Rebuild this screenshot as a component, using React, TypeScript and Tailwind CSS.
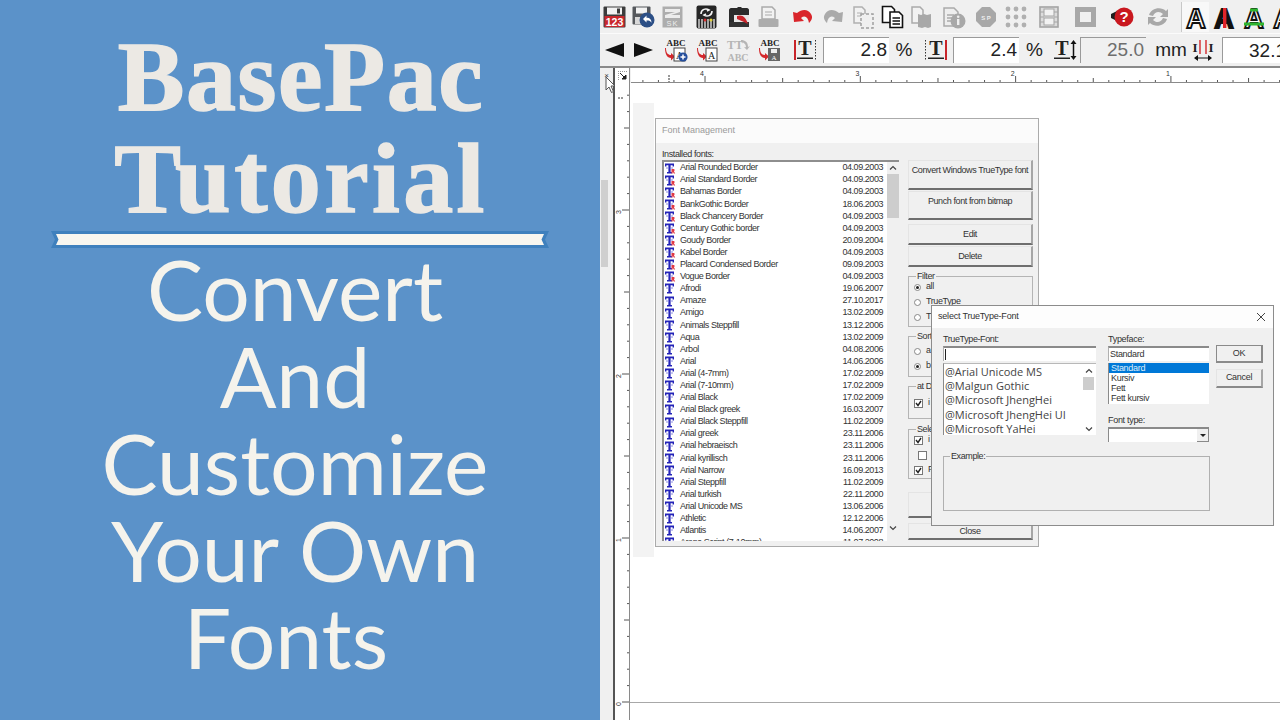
import type { ReactNode } from "react";

const fonts: [string, string, boolean][] = [
  ["Arial Rounded Border", "04.09.2003", true],
  ["Arial Standard Border", "04.09.2003", true],
  ["Bahamas Border", "04.09.2003", true],
  ["BankGothic Border", "18.06.2003", true],
  ["Black Chancery Border", "04.09.2003", true],
  ["Century Gothic border", "04.09.2003", true],
  ["Goudy Border", "20.09.2004", true],
  ["Kabel Border", "04.09.2003", true],
  ["Placard Condensed Border", "09.09.2003", true],
  ["Vogue Border", "04.09.2003", true],
  ["Afrodi", "19.06.2007", false],
  ["Amaze", "27.10.2017", false],
  ["Amigo", "13.02.2009", false],
  ["Animals Steppfill", "13.12.2006", false],
  ["Aqua", "13.02.2009", false],
  ["Arbol", "04.08.2006", false],
  ["Arial", "14.06.2006", false],
  ["Arial (4-7mm)", "17.02.2009", false],
  ["Arial (7-10mm)", "17.02.2009", false],
  ["Arial Black", "17.02.2009", false],
  ["Arial Black greek", "16.03.2007", false],
  ["Arial Black Steppfill", "11.02.2009", false],
  ["Arial greek", "23.11.2006", false],
  ["Arial hebraeisch", "23.11.2006", false],
  ["Arial kyrillisch", "23.11.2006", false],
  ["Arial Narrow", "16.09.2013", false],
  ["Arial Steppfill", "11.02.2009", false],
  ["Arial turkish", "22.11.2000", false],
  ["Arial Unicode MS", "13.06.2006", false],
  ["Athletic", "12.12.2006", false],
  ["Atlantis", "14.06.2007", false],
  ["Arena Script (7-10mm)", "11.07.2008", false],
];

const ttFonts = ["@Arial Unicode MS", "@Malgun Gothic", "@Microsoft JhengHei", "@Microsoft JhengHei UI", "@Microsoft YaHei"];

function Cell({ children, w = "w-[29px]" }: { children: ReactNode; w?: string }) {
  return <div className={`${w} h-full flex items-center justify-center shrink-0`}>{children}</div>;
}

function Svg({ w = 24, h = 24, children }: { w?: number; h?: number; children: ReactNode }) {
  return (
    <svg width={w} height={h} viewBox={`0 0 ${w} ${h}`}>
      {children}
    </svg>
  );
}

const serif = "Liberation Serif, serif";

function Floppy() {
  return (
    <Svg w={23} h={22}>
      <rect x="0.5" y="0.5" width="22" height="21" rx="1" fill="#3c3c3c" />
      <rect x="4" y="1.5" width="15" height="7" fill="#f2f2f2" />
      <rect x="14" y="2.5" width="3" height="5" fill="#3c3c3c" />
      <rect x="1.5" y="10" width="20" height="11" fill="#c9272c" />
      <text x="11.5" y="19.5" textAnchor="middle" fontSize="10.5" fontWeight="700" fill="#fff" fontFamily="Liberation Sans, sans-serif">
        123
      </text>
    </Svg>
  );
}

function FloppyBack() {
  return (
    <Svg w={23} h={22}>
      <rect x="0.5" y="0.5" width="18" height="18" rx="1" fill="#55585c" />
      <rect x="4" y="1.5" width="11" height="6" fill="#f2f2f2" />
      <rect x="3" y="11" width="9" height="7" fill="#d8d8d8" />
      <circle cx="15" cy="14" r="7.5" fill="#2c4f86" />
      <path d="M11 13l3.5-3.5v2.2c3.5 0 5 2 5 5-1-1.7-2.5-2.3-5-2.2v2z" fill="#fff" />
    </Svg>
  );
}

function GreyZ() {
  return (
    <Svg w={21} h={22}>
      <rect x="0.5" y="0.5" width="20" height="21" fill="#adadad" />
      <path d="M3 3h15v3L9 9h9v3H3V9l10-3H3z" fill="#ececec" />
      <text x="10.5" y="20" textAnchor="middle" fontSize="7.5" letterSpacing="1" fill="#ececec" fontFamily="Liberation Sans, sans-serif">
        SK
      </text>
    </Svg>
  );
}

function Stitches() {
  return (
    <Svg w={21} h={24}>
      <rect x="0.5" y="0.5" width="20" height="23" rx="2" fill="#262626" />
      <path d="M5 9c0-5 5-6 8-4l-2 1M16 6c0 5-5 6-8 4l2-1" stroke="#f4f4f4" strokeWidth="1.6" fill="none" />
      <path d="M3 14v9M6 14v9M9 14v9M12 14v9M15 14v9M18 14v9" stroke="#e8e8e8" strokeWidth="1.3" />
      <circle cx="9" cy="15" r="1.5" fill="#d23030" />
      <circle cx="15" cy="15" r="1.6" fill="#e0d040" />
    </Svg>
  );
}

function Machine() {
  return (
    <Svg w={22} h={22}>
      <path d="M1 4c0-1 1-2 2-2h6l1-1h3l1 1h5c1 0 2 1 2 2v6H1z" fill="#2b2b2b" />
      <rect x="1" y="10" width="5" height="7" fill="#2b2b2b" />
      <rect x="6" y="9" width="15" height="8" fill="#e6e6e6" />
      <rect x="1" y="16" width="20" height="5" fill="#333" />
      <path d="M9 10c5-2 9 1 11 8l-4-2-7-3z" fill="#c8242a" />
    </Svg>
  );
}

function Printer() {
  return (
    <Svg w={21} h={22}>
      <path d="M4 1h10l3 3v9H4z" fill="#f2f2f2" stroke="#aaa" strokeWidth="1.5" />
      <path d="M7 6h7M7 9h7" stroke="#aaa" strokeWidth="1.2" />
      <rect x="0.5" y="13" width="20" height="8" rx="1" fill="#acacac" />
    </Svg>
  );
}

function Turn({ color, flip }: { color: string; flip?: boolean }) {
  return (
    <Svg w={21} h={15}>
      <g transform={flip ? "translate(21 0) scale(-1 1)" : undefined}>
        <path d="M1 3l1 10 10-1-3-3c4-3 7-1 8 5 3-3 4-6 2-9-3-5-9-5-14-1z" fill={color} />
      </g>
    </Svg>
  );
}

function CopyDashed() {
  return (
    <Svg w={22} h={24}>
      <path d="M2 2h8l3 3v13H2z" fill="#f2f2f2" stroke="#b0b0b0" strokeWidth="1.5" />
      <path d="M5 8h5M5 11h5" stroke="#b0b0b0" />
      <rect x="9" y="9" width="12" height="14" fill="#f0f0f0" stroke="#a0a0a0" strokeWidth="1.5" strokeDasharray="3 2" />
    </Svg>
  );
}

function CopyBlack() {
  return (
    <Svg w={23} h={24}>
      <path d="M1.5 1.5h9l3 3v13h-12z" fill="#fff" stroke="#111" strokeWidth="1.6" />
      <path d="M9 7h9l3.5 3.5v12H9z" fill="#fff" stroke="#111" strokeWidth="1.6" />
      <path d="M11.5 13h7.5M11.5 16h7.5M11.5 19h7.5" stroke="#111" strokeWidth="1.4" />
    </Svg>
  );
}

function PasteGrey() {
  return (
    <Svg w={23} h={24}>
      <path d="M2 2h8l3 3v13H2z" fill="#f2f2f2" stroke="#aaa" strokeWidth="1.5" />
      <path d="M8 9l3 1 3-1 3 1 4-1v13l-3 1-3-1-3 1-4-1z" fill="#a8a8a8" />
    </Svg>
  );
}

function DocInfo() {
  return (
    <Svg w={24} h={24}>
      <path d="M2 3h10l4 4v14H2z" fill="#eee" stroke="#aaa" strokeWidth="1.5" />
      <path d="M5 10h7M5 13h5M5 16h5" stroke="#aaa" strokeWidth="1.3" />
      <circle cx="16" cy="16" r="7.5" fill="#a8a8a8" />
      <rect x="15" y="14" width="2.4" height="6" fill="#eee" />
      <circle cx="16.2" cy="11.8" r="1.3" fill="#eee" />
    </Svg>
  );
}

function HexStop() {
  return (
    <Svg w={22} h={24}>
      <path d="M7 2h8l6 6v8l-6 6H7l-6-6V8z" fill="#a8a8a8" />
      <text x="11" y="14.5" textAnchor="middle" fontSize="6" fill="#eee" fontWeight="700" fontFamily="Liberation Sans, sans-serif">
        S P
      </text>
    </Svg>
  );
}

function Dots() {
  const pts = [3, 11, 19];
  return (
    <Svg w={22} h={22}>
      {pts.map((y) => pts.map((x) => <circle key={`${x}-${y}`} cx={x} cy={y} r="2.4" fill="#b0b0b0" />))}
    </Svg>
  );
}

function Film() {
  return (
    <Svg w={20} h={22}>
      <rect x="1" y="1" width="18" height="20" fill="#dcdcdc" stroke="#a4a4a4" strokeWidth="1.6" />
      <rect x="5" y="3" width="10" height="7" fill="#f2f2f2" stroke="#a4a4a4" />
      <rect x="5" y="12" width="10" height="7" fill="#f2f2f2" stroke="#a4a4a4" />
      <path d="M1 6h4M1 11h4M1 16h4M15 6h4M15 11h4M15 16h4" stroke="#a4a4a4" />
    </Svg>
  );
}

function Help() {
  return (
    <Svg w={24} h={24}>
      <path d="M1 9l6-3v10l-6-3z" fill="#1e1e1e" />
      <circle cx="14" cy="12" r="9.5" fill="#c9181f" />
      <text x="14" y="17" textAnchor="middle" fontSize="15" fontWeight="700" fill="#fff" fontFamily="Liberation Sans, sans-serif">
        ?
      </text>
    </Svg>
  );
}

function Refresh() {
  return (
    <Svg w={24} h={24}>
      <path d="M3 10C5 3 15 1 20 6l2-2v8h-8l3-3c-3-3-8-3-10 2z" fill="#a8a8a8" />
      <path d="M21 14c-2 7-12 9-17 4l-2 2v-8h8l-3 3c3 3 8 3 10-2z" fill="#a8a8a8" />
    </Svg>
  );
}

function BigA({ fill, stroke, bar }: { fill: string; stroke: string; bar?: "red" | "green" }) {
  return (
    <Svg w={26} h={28}>
      <text x="13" y="25" textAnchor="middle" fontSize="27" fontWeight="700" fill={fill} stroke={stroke} strokeWidth="1.8" fontFamily="Liberation Sans, sans-serif">
        A
      </text>
      {bar === "red" && <rect x="12" y="5" width="3.4" height="20" fill="#e0242a" />}
      {bar === "green" && <path d="M3 21h20M9 7h8" stroke="#2fb52f" strokeWidth="3" />}
    </Svg>
  );
}

function AbcIcon({ mini, grey }: { mini: "add" | "a" | "save"; grey?: boolean }) {
  return (
    <Svg w={24} h={24}>
      <text x="12" y="8" textAnchor="middle" fontSize="9" fontWeight="700" fill={grey ? "#aaa" : "#222"} fontFamily={serif}>
        ABC
      </text>
      <path d="M2 10c0 5 2 7 5 7v-2l4 3.5-4 4V20c-4 0-6-4-6-10z" fill="#d3282c" />
      {mini === "save" ? (
        <>
          <rect x="10" y="10" width="12" height="13" fill="#666" />
          <rect x="13" y="11" width="6" height="4" fill="#eee" />
          <text x="16" y="22" textAnchor="middle" fontSize="7" fill="#fff" fontFamily={serif}>
            A
          </text>
        </>
      ) : (
        <>
          <rect x="10" y="10" width="11" height="13" fill="#fff" stroke="#444" />
          <text x="15.5" y="21" textAnchor="middle" fontSize="10" fill="#222" fontFamily={serif}>
            A
          </text>
        </>
      )}
      {mini === "add" && (
        <>
          <circle cx="19" cy="19" r="4.6" fill="#254f9c" />
          <path d="M16.5 19h5M19 16.5v5" stroke="#fff" strokeWidth="1.5" />
        </>
      )}
    </Svg>
  );
}

function TtAbc() {
  return (
    <Svg w={24} h={24}>
      <text x="1" y="11" fontSize="12" fontWeight="700" fill="#b5b5b5" fontFamily={serif}>
        TT
      </text>
      <path d="M15 2c4 0 7 2 7 7l2-1-3 4-3-3 2 .2c0-3-2-5-5-5z" fill="#b5b5b5" />
      <text x="12" y="23" textAnchor="middle" fontSize="10" fontWeight="700" fill="#b5b5b5" fontFamily={serif}>
        ABC
      </text>
    </Svg>
  );
}

function TScale({ side }: { side: "left" | "right" }) {
  return (
    <Svg w={24} h={22}>
      {side === "left" ? <rect x="1" y="1" width="2" height="20" fill="#c8242a" /> : <path d="M1.5 1v20" stroke="#333" strokeDasharray="1.5 1.5" />}
      <text x="12" y="16" textAnchor="middle" fontSize="20" fontWeight="700" fill="#222" fontFamily={serif}>
        T
      </text>
      <rect x="4" y="18.5" width="16" height="1.5" fill="#222" />
      {side === "left" ? <path d="M22.5 1v20" stroke="#333" strokeDasharray="1.5 1.5" /> : <rect x="21" y="1" width="2" height="20" fill="#c8242a" />}
    </Svg>
  );
}

function THeight() {
  return (
    <Svg w={24} h={22}>
      <text x="9" y="16" textAnchor="middle" fontSize="20" fontWeight="700" fill="#222" fontFamily={serif}>
        T
      </text>
      <rect x="1" y="18.5" width="16" height="1.5" fill="#222" />
      <path d="M20.5 4v14" stroke="#111" strokeWidth="1.5" />
      <path d="M20.5 1l3 4h-6zM20.5 21l3-4h-6z" fill="#111" />
    </Svg>
  );
}

function SpacingIcon() {
  return (
    <Svg w={24} h={24}>
      <path d="M9 2v14M15 2v14" stroke="#d3282c" strokeWidth="1.4" />
      <text x="4" y="14" textAnchor="middle" fontSize="13" fontWeight="700" fill="#222" fontFamily={serif}>
        I
      </text>
      <text x="20" y="14" textAnchor="middle" fontSize="13" fontWeight="700" fill="#222" fontFamily={serif}>
        I
      </text>
      <path d="M7 20h10" stroke="#111" />
      <path d="M3 20l4-3v6zM21 20l-4-3v6z" fill="#111" />
    </Svg>
  );
}

function Field({ value, w, grey }: { value: string; w: string; grey?: boolean }) {
  return (
    <div
      className={`${w} h-[26px] shrink-0 border-l border-t border-l-[#9a9a9a] border-t-[#9a9a9a] flex items-center justify-end pr-[2px] text-[19px] ${
        grey ? "bg-[#f0f0f0] text-[#6e6e6e]" : "bg-white text-[#222]"
      }`}
    >
      {value}
    </div>
  );
}

function Toolbars() {
  return (
    <>
      <div className="h-[34px] flex items-center bg-[#f0f0f0] border-b border-b-[#fbfbfb] overflow-hidden shrink-0">
        <Cell><Floppy /></Cell>
        <Cell><FloppyBack /></Cell>
        <Cell><GreyZ /></Cell>
        <Cell w="w-[38px]"><Stitches /></Cell>
        <Cell w="w-[28px]"><Machine /></Cell>
        <Cell w="w-[30px]"><Printer /></Cell>
        <div className="w-[2px] shrink-0" />
        <Cell w="w-[35px]"><Turn color="#d9252b" /></Cell>
        <Cell w="w-[27px]"><Turn color="#aaaaaa" flip /></Cell>
        <Cell w="w-[31px]"><CopyDashed /></Cell>
        <Cell><CopyBlack /></Cell>
        <Cell><PasteGrey /></Cell>
        <Cell w="w-[35px]"><DocInfo /></Cell>
        <Cell w="w-[30px]"><HexStop /></Cell>
        <Cell w="w-[30px]"><Dots /></Cell>
        <Cell w="w-[36px]"><Film /></Cell>
        <Cell w="w-[37px]"><div className="w-[21px] h-[20px] border-[5px] border-[#a8a8a8] bg-[#f0f0f0]" /></Cell>
        <Cell w="w-[36px]"><Help /></Cell>
        <Cell w="w-[36px]"><Refresh /></Cell>
        <div className="w-px h-[30px] bg-[#c8c8c8] ml-[5px] shrink-0" />
        <div className="w-[27px] h-[30px] bg-[#f8f8f8] flex items-center justify-center shrink-0">
          <BigA fill="#fff" stroke="#111" />
        </div>
        <Cell w="w-[30px]"><BigA fill="#111" stroke="#111" bar="red" /></Cell>
        <Cell w="w-[29px]"><BigA fill="#fff" stroke="#111" bar="green" /></Cell>
        <Cell w="w-[29px]"><BigA fill="#fff" stroke="#111" /></Cell>
      </div>
      <div className="h-[32px] flex items-center bg-[#f0f0f0] overflow-hidden shrink-0">
        <Cell>
          <div className="w-0 h-0 border-y-[7px] border-y-transparent border-r-[19px] border-r-[#111]" />
        </Cell>
        <Cell>
          <div className="w-0 h-0 border-y-[7px] border-y-transparent border-l-[19px] border-l-[#111]" />
        </Cell>
        <Cell w="w-[35px]"><AbcIcon mini="add" /></Cell>
        <Cell w="w-[30px]"><AbcIcon mini="a" /></Cell>
        <Cell w="w-[30px]"><TtAbc /></Cell>
        <Cell w="w-[34px]"><AbcIcon mini="save" /></Cell>
        <Cell w="w-[36px]"><TScale side="left" /></Cell>
        <Field value="2.8" w="w-[66px]" />
        <span className="w-[30px] text-center text-[19px] text-[#222] shrink-0">%</span>
        <Cell w="w-[34px]"><TScale side="right" /></Cell>
        <Field value="2.4" w="w-[66px]" />
        <span className="w-[31px] text-center text-[19px] text-[#222] shrink-0">%</span>
        <Cell w="w-[30px]"><THeight /></Cell>
        <Field value="25.0" w="w-[66px]" grey />
        <span className="w-[42px] pl-[8px] text-center text-[19px] text-[#222] shrink-0">mm</span>
        <Cell w="w-[30px]"><SpacingIcon /></Cell>
        <div className="w-[4px] shrink-0" />
        <div className="w-[60px] h-[26px] shrink-0 bg-white border-l border-t border-l-[#9a9a9a] border-t-[#9a9a9a] pl-[26px] leading-[26px] text-[19px] text-[#222] whitespace-nowrap overflow-hidden">32.1</div>
      </div>
      <div className="h-[2px] bg-[#8a8a8a] shrink-0" />
    </>
  );
}

function HRuler() {
  const ticks = Array.from({ length: 43 }, (_, i) => i);
  return (
    <svg width={649} height={15} viewBox="0 0 649 15" className="block">
      <rect width="649" height="15" fill="#fff" />
      <path d="M0 14.5H649" stroke="#8a8a8a" />
      {ticks.map((i) => {
        const x = 74 - 62.1 + i * 15.53;
        const major = i % 10 === 4;
        const half = i % 10 === 9;
        return <path key={i} d={`M${x} ${major ? 8 : half ? 10 : 12}V14`} stroke="#555" />;
      })}
      <path d="M38 7V14" stroke="#333" strokeDasharray="2 1" />
      {["4", "3", "2", "1"].map((n, i) => (
        <text key={n} x={73 + i * 155.3} y="7.5" fontSize="7" fill="#333" textAnchor="end" fontFamily="Liberation Sans, sans-serif">
          {n}
        </text>
      ))}
    </svg>
  );
}

function VRuler() {
  const ticks = Array.from({ length: 41 }, (_, i) => i);
  return (
    <svg width={15} height={637} viewBox="0 0 15 637" className="block">
      <rect width="15" height="637" fill="#fff" />
      <path d="M14.5 0V637" stroke="#8a8a8a" />
      {ticks.map((i) => {
        const y = 619 - i * 16.4;
        const major = i % 10 === 0;
        const half = i % 10 === 5;
        return <path key={i} d={`M${major ? 7 : half ? 9 : 12} ${y}H14`} stroke="#555" />;
      })}
      <path d="M3 15H8" stroke="#333" strokeDasharray="2 1" />
      {["0", "1", "2", "3"].map((n, i) => (
        <text key={n} x="0" y="0" fontSize="7" fill="#333" textAnchor="middle" transform={`translate(6 ${621 - i * 164}) rotate(-90)`} fontFamily="Liberation Sans, sans-serif">
          {n}
        </text>
      ))}
    </svg>
  );
}

function FontGlyph({ border }: { border: boolean }) {
  return (
    <svg width={12} height={11} viewBox="0 0 12 11" className="shrink-0">
      <path d="M1 .5h9v3H8.6V2.2H6.6V9H8v1.5H3V9h1.4V2.2H2.4v1.3H1z" fill="#2424b8" />
      <path d="M2 5h2.4M6.6 5H9" stroke="#8a8ae0" />
      {border && <path d="M7.5 6h2.2c1.2 0 1.2 2 .2 2.2L11.2 10.5H9.8L8.7 8.4v2.1H7.5z" fill="#e03844" />}
    </svg>
  );
}

function Chevron({ dir }: { dir: "up" | "down" }) {
  return (
    <svg width={8} height={6} viewBox="0 0 8 6">
      <path d={dir === "up" ? "M1 4.5l3-3 3 3" : "M1 1.5l3 3 3-3"} stroke="#444" strokeWidth="1.2" fill="none" />
    </svg>
  );
}

function WinButton({ label, h, top }: { label: string; h: string; top?: boolean }) {
  return (
    <div
      className={`${h} w-full shrink-0 flex justify-center bg-[#f0f0f0] border-t border-l border-t-[#e4e4e4] border-l-[#e4e4e4] border-r-2 border-b-2 border-r-[#a6a6a6] border-b-[#6e6e6e] text-[9px] tracking-[-0.4px] whitespace-nowrap text-[#333] ${
        top ? "items-start pt-[3px]" : "items-center pt-px"
      }`}
    >
      {label}
    </div>
  );
}

function Radio({ on }: { on?: boolean }) {
  return (
    <span className="w-[7px] h-[7px] rounded-full border border-[#888] bg-white flex items-center justify-center shrink-0">
      {on && <span className="w-[3px] h-[3px] rounded-full bg-[#222]" />}
    </span>
  );
}

function Check({ on }: { on?: boolean }) {
  return (
    <svg width={9} height={9} viewBox="0 0 9 9" className="shrink-0">
      <rect x="0.5" y="0.5" width="8" height="8" fill="#fff" stroke="#777" />
      {on && <path d="M2 4l2 2.5L7 2" stroke="#222" strokeWidth="1.4" fill="none" />}
    </svg>
  );
}

function Group({ title, h, children, className = "" }: { title: string; h: string; children: ReactNode; className?: string }) {
  return (
    <fieldset className={`${h} border border-[#b4b4b4] pl-[5px] shrink-0 flex flex-col ${className}`}>
      <legend className="ml-[2px] px-[1px] text-[9px] leading-[10px] tracking-[-0.4px] text-[#333]">{title}</legend>
      {children}
    </fieldset>
  );
}

function Row({ children, pl = "" }: { children: ReactNode; pl?: string }) {
  return <div className={`flex items-center gap-[5px] h-[10px] text-[9px] tracking-[-0.4px] text-[#333] ${pl}`}>{children}</div>;
}

function FontManagement() {
  return (
    <div className="absolute left-[55px] top-[118px] w-[384px] h-[429px] bg-[#f0f0f0] border border-[#ababab] flex flex-col">
      <div className="h-[24px] bg-[#fbfbfb] pl-[6px] flex items-center text-[9px] text-[#9a9a9a] shrink-0">Font Management</div>
      <div className="flex-1 flex min-h-0 pl-[6px]">
        <div className="w-[237px] flex flex-col shrink-0">
          <div className="h-[17px] pt-[6px] text-[9px] leading-[10px] tracking-[-0.4px] text-[#333] shrink-0">Installed fonts:</div>
          <div className="h-[381px] flex border-l-2 border-t-2 border-l-[#8e8e8e] border-t-[#8e8e8e] bg-white overflow-hidden">
            <div className="flex-1 min-w-0">
              {fonts.map(([name, date, border]) => (
                <div key={name} className="h-[12.1px] flex items-center text-[9px] tracking-[-0.45px] text-[#333]">
                  <FontGlyph border={border} />
                  <span className="ml-[4px] flex-1 whitespace-nowrap">{name}</span>
                  <span className="w-[42px] mr-[4px] text-right whitespace-nowrap">{date}</span>
                </div>
              ))}
            </div>
            <div className="w-[12px] bg-[#f0f0f0] flex flex-col items-center shrink-0">
              <div className="h-[12px] flex items-center"><Chevron dir="up" /></div>
              <div className="w-full h-[44px] bg-[#cdcdcd]" />
              <div className="flex-1" />
              <div className="h-[12px] mb-[7px] flex items-center"><Chevron dir="down" /></div>
            </div>
          </div>
        </div>
        <div className="w-[125px] ml-[9px] mt-[17px] flex flex-col shrink-0">
          <WinButton label="Convert Windows TrueType font" h="h-[30px]" top />
          <div className="h-[1px]" />
          <WinButton label="Punch font from bitmap" h="h-[29px]" top />
          <div className="h-[4px]" />
          <WinButton label="Edit" h="h-[21px]" />
          <div className="h-[1px]" />
          <WinButton label="Delete" h="h-[21px]" />
          <div className="h-[4px]" />
          <Group title="Filter" h="h-[56px]" className="gap-[5px] pt-[1px]">
            <Row><Radio on /><span>all</span></Row>
            <Row><Radio /><span>TrueType</span></Row>
            <Row><Radio /><span>T</span></Row>
          </Group>
          <div className="h-[4px]" />
          <Group title="Sort" h="h-[46px]" className="gap-[5px] pt-[5px]">
            <Row><Radio /><span>a</span></Row>
            <Row><Radio on /><span>b</span></Row>
          </Group>
          <div className="h-[4px]" />
          <Group title="at D" h="h-[38px]" className="pt-[7px]">
            <Row><Check on /><span>i</span></Row>
          </Group>
          <div className="h-[5px]" />
          <Group title="Sele" h="h-[55px]" className="gap-[5px] pt-[1px]">
            <Row><Check on /><span>i</span></Row>
            <Row pl="pl-[4px]"><Check /></Row>
            <Row><Check on /><span>F</span></Row>
          </Group>
          <div className="h-[13px]" />
          <WinButton label="" h="h-[26px]" />
          <div className="h-[5px]" />
          <WinButton label="Close" h="h-[17px]" />
        </div>
      </div>
    </div>
  );
}

function SelectDialog() {
  return (
    <div className="absolute left-[331px] top-[305px] w-[343px] h-[221px] bg-[#f0f0f0] border border-[#8c8c8c] flex flex-col">
      <div className="h-[22px] bg-[#fdfdfd] pl-[6px] pr-[7px] flex items-center justify-between text-[9px] tracking-[-0.2px] text-[#333] shrink-0">
        <span>select TrueType-Font</span>
        <svg width={10} height={10} viewBox="0 0 10 10">
          <path d="M1 1l8 8M9 1l-8 8" stroke="#444" />
        </svg>
      </div>
      <div className="flex-1 flex flex-col pl-[11px] pt-[6px]">
        <div className="flex">
          <div className="w-[153px] shrink-0">
            <div className="h-[10px] leading-[10px] text-[9px] tracking-[-0.4px] text-[#333]">TrueType-Font:</div>
            <div className="mt-[2px] h-[15px] bg-white border-t-2 border-l border-t-[#8a8a8a] border-l-[#b0b0b0] flex items-center pl-[1px]">
              <div className="w-px h-[11px] bg-[#222]" />
            </div>
            <div className="mt-[2px] h-[72px] bg-white border-l border-t border-l-[#8a8a8a] border-t-[#b8b8b8] flex overflow-hidden">
              <div className="flex-1 min-w-0 pl-[1px] pt-[1px] text-[11px] leading-[14.2px] text-[#444]" style={{ fontFamily: "Open Sans, sans-serif" }}>
                {ttFonts.map((f) => (
                  <div key={f} className="whitespace-nowrap">{f}</div>
                ))}
              </div>
              <div className="w-[13px] flex flex-col items-center shrink-0 mr-[1px]">
                <div className="h-[13px] flex items-center"><Chevron dir="up" /></div>
                <div className="w-[11px] h-[13px] bg-[#cdcdcd]" />
                <div className="flex-1" />
                <div className="h-[12px] flex items-center"><Chevron dir="down" /></div>
              </div>
            </div>
          </div>
          <div className="w-[101px] ml-[12px] shrink-0 text-[9px] tracking-[-0.3px] text-[#333]">
            <div className="h-[10px] leading-[10px]">Typeface:</div>
            <div className="mt-[2px] h-[15px] bg-white border-t-2 border-l border-t-[#8a8a8a] border-l-[#b0b0b0] pl-[1px] leading-[13px]">Standard</div>
            <div className="mt-[2px] h-[41px] bg-white border-l border-l-[#8a8a8a] leading-[10px]">
              <div className="bg-[#0078d7] text-[#dfeefa] pl-[2px]">Standard</div>
              <div className="pl-[2px]">Kursiv</div>
              <div className="pl-[2px]">Fett</div>
              <div className="pl-[2px]">Fett kursiv</div>
            </div>
            <div className="mt-[11px] h-[10px] leading-[10px]">Font type:</div>
            <div className="mt-[2px] h-[15px] bg-white border-t-2 border-l border-t-[#8a8a8a] border-l-[#8a8a8a] flex justify-end">
              <div className="w-[12px] h-full bg-[#f0f0f0] border-r border-b border-r-[#8a8a8a] border-b-[#8a8a8a] flex items-center justify-center">
                <div className="w-0 h-0 border-x-[3px] border-x-transparent border-t-[3px] border-t-[#222]" />
              </div>
            </div>
          </div>
          <div className="w-[47px] ml-[7px] shrink-0 flex flex-col gap-[6px] pt-[11px] text-[9px] tracking-[-0.3px] text-[#333]">
            <div className="h-[18px] bg-[#f0f0f0] border border-[#8a8a8a] border-r-2 border-b-2 flex items-center justify-center">OK</div>
            <div className="h-[19px] bg-[#f0f0f0] border-t border-l border-t-[#e4e4e4] border-l-[#e4e4e4] border-r-2 border-b-2 border-r-[#a6a6a6] border-b-[#8a8a8a] flex items-center justify-center">Cancel</div>
          </div>
        </div>
        <fieldset className="w-[267px] h-[60px] mt-[9px] border border-[#b0b0b0]">
          <legend className="ml-[6px] px-[1px] text-[9px] leading-[10px] tracking-[-0.4px] text-[#333]">Example:</legend>
        </fieldset>
      </div>
    </div>
  );
}

export default function App() {
  return (
    <div className="w-[1280px] h-[720px] flex overflow-hidden bg-white" style={{ fontFamily: "Liberation Sans, sans-serif" }}>
      <div className="w-[600px] h-full shrink-0 bg-[#5b92c9] flex flex-col items-center">
        <div className="pt-[26px] pl-[2px] text-[100px] leading-[102px] font-bold text-center tracking-[1.6px] text-[#ece9e4] [-webkit-text-stroke:1.5px_#ece9e4]" style={{ fontFamily: serif }}>
          <div>BasePac</div>
          <div className="tracking-[3.4px]">Tutorial</div>
        </div>
        <svg width={498} height={17} viewBox="0 0 498 17" className="shrink-0 mt-[1px]">
          <path d="M0 0H498L494 8.5L498 17H0L4 8.5Z" fill="#3f80bd" />
          <path d="M5 3H493L490.5 8.5L493 14H5L7.5 8.5Z" fill="#f8f6ef" />
        </svg>
        <div className="-ml-[10px] -mt-[3px] text-[84px] leading-[87px] text-center text-[#f5f3ec]" style={{ fontFamily: "Lato, sans-serif" }}>
          <div>Convert</div>
          <div>And</div>
          <div>Customize</div>
          <div>Your Own</div>
          <div className="-ml-[18px]">Fonts</div>
        </div>
      </div>
      <div className="relative w-[680px] h-full flex flex-col shrink-0">
        <Toolbars />
        <div className="h-[15px] flex shrink-0 bg-[#f0f0f0]">
          <div className="w-[13px] flex items-center justify-center text-[8px] text-[#333]">×</div>
          <div className="w-[2px] bg-[#555]" />
          <div className="w-[15px] bg-white border-r border-[#8a8a8a] flex items-center justify-center">
            <svg width={9} height={9} viewBox="0 0 9 9">
              <path d="M0 .5H9M.5 0V9" stroke="#999" strokeDasharray="1 1" />
              <path d="M2 2l6 6M8 4v4H4z" stroke="#222" fill="#222" />
            </svg>
          </div>
          <div className="w-px" />
          <HRuler />
        </div>
        <div className="flex-1 flex min-h-0">
          <div className="w-[13px] bg-[#f0f0f0] shrink-0 pl-[1px] pt-[97px]">
            <div className="w-[7px] h-[87px] bg-[#cfcfcf]" />
          </div>
          <div className="w-[2px] bg-[#555] shrink-0" />
          <VRuler />
          <div className="relative flex-1 bg-white">
            <div className="absolute left-[3px] top-[20px] w-[21px] h-[454px] bg-[#f3f3f3]" />
            <div className="absolute left-0 right-0 top-[619px] h-px bg-[#a8a8a8]" />
          </div>
        </div>
        <FontManagement />
        <SelectDialog />
        <svg width={12} height={18} viewBox="0 0 12 18" className="absolute left-[5px] top-[76px]">
          <path d="M1 1v13l3-3 2.5 5.5 2-1L6 10h4z" fill="#fff" stroke="#555" />
        </svg>
      </div>
    </div>
  );
}
